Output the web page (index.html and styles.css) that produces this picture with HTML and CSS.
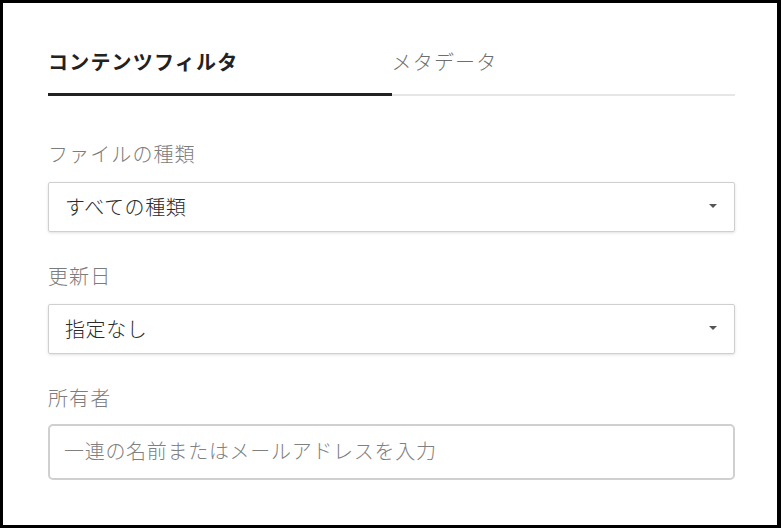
FILE: index.html
```html
<!DOCTYPE html>
<html lang="ja">
<head>
    <meta charset="UTF-8">
    <meta name="viewport" content="width=device-width, initial-scale=1.0">
    <title>フィルタ</title>
    <link rel="stylesheet" href="styles.css">
</head>
<body>
    <div class="frame">
        <div class="tabs">
            <div class="tab active">コンテンツフィルタ</div>
            <div class="tab">メタデータ</div>
        </div>

        <div class="field">
            <div class="label">ファイルの種類</div>
            <div class="select">
                <span>すべての種類</span>
                <span class="arrow"></span>
            </div>
        </div>

        <div class="field">
            <div class="label">更新日</div>
            <div class="select">
                <span>指定なし</span>
                <span class="arrow"></span>
            </div>
        </div>

        <div class="field">
            <div class="label">所有者</div>
            <input type="text" class="input-field" placeholder="一連の名前またはメールアドレスを入力">
        </div>
    </div>
</body>
</html>
```

FILE: styles.css
```css
body {
    margin: 0;
    background: #fff;
    font-family: "Noto Sans CJK JP", "Noto Sans", sans-serif;
}

.frame {
    box-sizing: border-box;
    width: 781px;
    height: 528px;
    border: 3px solid #000;
    border-right-width: 4px;
    padding: 45px 42px 0 45px;
}

.tabs {
    display: flex;
    border-bottom: 2px solid #e6e6e6;
}

.tab {
    flex: 1;
    font-size: 20px;
    line-height: 28px;
    letter-spacing: 1.2px;
    font-weight: 300;
    color: #6e6e6e;
    padding-bottom: 17px;
    margin-bottom: -2px;
    border-bottom: 3px solid transparent;
}

.tab.active {
    color: #222;
    font-weight: bold;
    border-bottom-color: #222;
}

.field {
    margin-top: 30px;
}

.tabs + .field {
    margin-top: 44px;
}

.label {
    font-size: 20px;
    line-height: 28px;
    letter-spacing: 1.1px;
    font-weight: 300;
    color: #7c7c7c;
    margin-bottom: 14px;
}

.select {
    box-sizing: border-box;
    height: 50px;
    display: flex;
    align-items: center;
    justify-content: space-between;
    padding: 0 17px 2px 16px;
    border: 1px solid #cfcfcf;
    border-radius: 2px;
    box-shadow: 0 1px 3px rgba(0, 0, 0, 0.12);
    font-size: 20px;
    letter-spacing: 0.6px;
    font-weight: 300;
    color: #2a2a2a;
}

.arrow {
    width: 0;
    height: 0;
    border-left: 4px solid transparent;
    border-right: 4px solid transparent;
    border-top: 4px solid #555;
}

.input-field {
    box-sizing: border-box;
    display: block;
    width: 100%;
    height: 56px;
    margin-top: -2px;
    padding: 0 14px 4px;
    border: 2px solid #d0d0d0;
    border-radius: 5px;
    font-family: inherit;
    font-size: 20px;
    letter-spacing: 0.7px;
    font-weight: 300;
    color: #333;
    outline: none;
}

.input-field::placeholder {
    color: #808080;
}
```
